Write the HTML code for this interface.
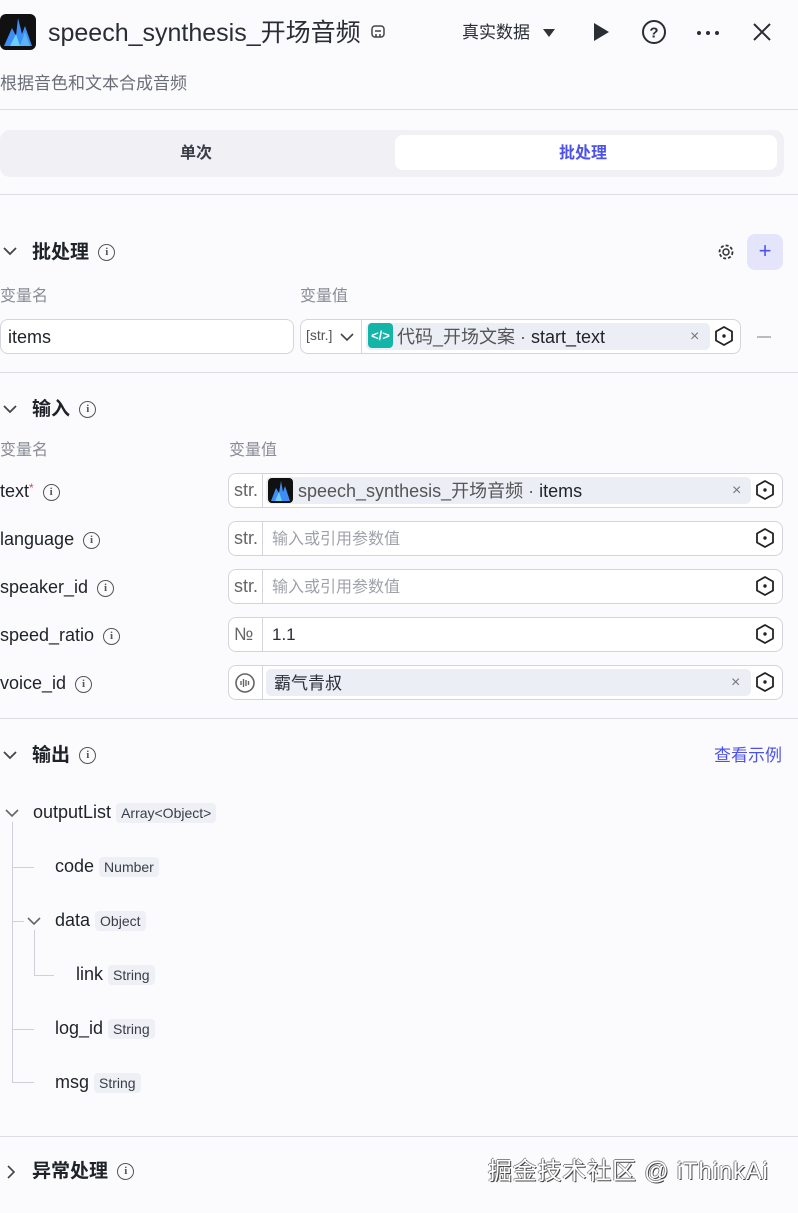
<!DOCTYPE html>
<html><head><meta charset="utf-8"><style>
*{box-sizing:border-box;margin:0;padding:0}
body{width:798px;height:1213px;background:#fbfbfd;font-family:"Liberation Sans","Noto Sans CJK SC",sans-serif;color:#1f2329;position:relative;overflow:hidden;line-height:1.2}
.a{position:absolute;white-space:nowrap}
.hr{position:absolute;left:0;width:798px;height:1px;background:#dcdce2}
.logo{position:absolute;background:#111;border-radius:6px;overflow:hidden}
.sec{font-size:19px;font-weight:bold;color:#1f2329}
.lbl{font-size:16px;color:#8a8c96}
.inp{position:absolute;border:1px solid #d4d5dc;border-radius:8px;background:#fff;height:35px}
.tag{position:absolute;background:#eceef6;border-radius:5px}
.pill{background:#eef0f6;border-radius:4px;font-size:14px;padding:2px 5px;color:#3a3d47}
.info{display:inline-block;width:17px;height:17px;border:1.5px solid #555;border-radius:50%;font-size:11px;text-align:center;line-height:14px;font-weight:bold;color:#555;vertical-align:middle;font-family:"Liberation Serif",serif;margin-left:4px}
.fname{font-size:18px;color:#1f2329}
.ph{color:#a0a2ab;font-size:16px}
.x{color:#777;font-size:16px}
.tl{position:absolute;background:#d0d1d8}
</style></head><body>

<div class="logo" style="left:0;top:14px;width:36px;height:36px">
<svg width="36" height="36"><polygon points="4,32 12,14 16,22 18,4 22,20 25,12 32,32" fill="#3e8ef7"/><polygon points="10,32 16,20 20,32" fill="#6ad0f5"/><polygon points="20,32 25,18 30,32" fill="#5ab5f7"/></svg></div>
<div class="a" style="left:48px;top:18px;font-size:25px;color:#2a2d35">speech_synthesis_开场音频</div>
<svg class="a" style="left:370px;top:24px" width="16" height="16"><rect x="2" y="2" width="12" height="11" rx="3" fill="none" stroke="#444" stroke-width="1.5"/><path d="M5 7h6M6 10v3M10 10v3" stroke="#444" stroke-width="1.5"/></svg>
<div class="a" style="left:462px;top:23px;font-size:17px;color:#2a2d35">真实数据</div>
<svg class="a" style="left:542px;top:28px" width="14" height="10"><polygon points="1,1 13,1 7,9" fill="#333"/></svg>
<svg class="a" style="left:592px;top:22px" width="18" height="20"><polygon points="2,1 17,10 2,19" fill="#2a2d35"/></svg>
<svg class="a" style="left:641px;top:19px" width="26" height="26"><circle cx="13" cy="13" r="11" fill="none" stroke="#2a2d35" stroke-width="2"/><text x="13" y="18.5" text-anchor="middle" font-size="15" font-weight="bold" fill="#2a2d35" font-family="Liberation Sans">?</text></svg>
<svg class="a" style="left:696px;top:30px" width="26" height="6"><circle cx="3" cy="3" r="2" fill="#2a2d35"/><circle cx="12" cy="3" r="2" fill="#2a2d35"/><circle cx="21" cy="3" r="2" fill="#2a2d35"/></svg>
<svg class="a" style="left:752px;top:22px" width="20" height="20"><path d="M2 2L18 18M18 2L2 18" stroke="#2a2d35" stroke-width="2"/></svg>

<div class="a" style="left:0;top:74px;font-size:17px;color:#6b6e78">根据音色和文本合成音频</div>
<div class="hr" style="top:109px"></div>

<div class="a" style="left:0;top:130px;width:784px;height:47px;background:#f1f1f5;border-radius:10px"></div>
<div class="a" style="left:395px;top:135px;width:382px;height:35px;background:#fff;border-radius:8px"></div>
<div class="a" style="left:180px;top:144px;font-size:16px;color:#3a3d47;font-weight:bold">单次</div>
<div class="a" style="left:559px;top:144px;font-size:16px;color:#4d53e8;font-weight:bold">批处理</div>
<div class="hr" style="top:194px"></div>

<svg class="a" style="left:3px;top:246px" width="14" height="10"><path d="M1 2l6 6 6-6" stroke="#444" stroke-width="1.8" fill="none"/></svg>
<div class="a sec" style="left:32px;top:242px">批处理 <span class="info">i</span></div>
<svg class="a" style="left:717px;top:243px" width="18" height="18"><circle cx="9" cy="9" r="3" fill="none" stroke="#333" stroke-width="1.5"/><circle cx="9" cy="9" r="6.5" fill="none" stroke="#333" stroke-width="1.8" stroke-dasharray="3 2"/></svg>
<div class="a" style="left:747px;top:234px;width:36px;height:36px;background:#e4e5fb;border-radius:8px;color:#4d53e8;font-size:22px;text-align:center;line-height:34px">+</div>
<div class="a lbl" style="left:0;top:287px">变量名</div>
<div class="a lbl" style="left:300px;top:287px">变量值</div>
<div class="inp" style="left:0;top:319px;width:294px"></div>
<div class="a fname" style="left:8px;top:327px">items</div>
<div class="inp" style="left:300px;top:319px;width:441px"></div>
<div class="a" style="left:306px;top:327px;font-size:14px;color:#555">[str.]</div>
<svg class="a" style="left:340px;top:332px" width="14" height="10"><path d="M1 2l6 6 6-6" stroke="#444" stroke-width="1.6" fill="none"/></svg>
<div class="a" style="left:361px;top:320px;width:1px;height:33px;background:#d4d5dc"></div>
<div class="tag" style="left:366px;top:323px;width:344px;height:27px"></div>
<div class="a" style="left:368px;top:323px;width:25px;height:25px;background:#13b5a8;border-radius:4px;color:#fff;font-size:13px;text-align:center;line-height:25px;font-weight:bold">&lt;/&gt;</div>
<div class="a" style="left:397px;top:326px;font-size:18px;color:#555;line-height:22px">代码_开场文案 · <span style="color:#1f2329">start_text</span></div>
<div class="a x" style="left:690px;top:327px">×</div>
<svg class="a" style="left:714px;top:326px" width="20" height="20"><polygon points="10,1 18,5.5 18,14.5 10,19 2,14.5 2,5.5" fill="none" stroke="#222" stroke-width="1.8" stroke-linejoin="round"/><circle cx="10" cy="10" r="1.7" fill="#222"/></svg>
<div class="a" style="left:757px;top:336px;width:14px;height:1.5px;background:#bbb"></div>
<div class="hr" style="top:372px"></div>

<svg class="a" style="left:3px;top:404px" width="14" height="10"><path d="M1 2l6 6 6-6" stroke="#444" stroke-width="1.8" fill="none"/></svg>
<div class="a sec" style="left:32px;top:399px">输入 <span class="info">i</span></div>
<div class="a lbl" style="left:0;top:441px">变量名</div>
<div class="a lbl" style="left:229px;top:441px">变量值</div>

<div class="a fname" style="left:0;top:481px">text<span style="color:#e54545;font-size:12px;vertical-align:top">*</span> <span class="info">i</span></div>
<div class="a fname" style="left:0;top:529px">language <span class="info">i</span></div>
<div class="a fname" style="left:0;top:577px">speaker_id <span class="info">i</span></div>
<div class="a fname" style="left:0;top:625px">speed_ratio <span class="info">i</span></div>
<div class="a fname" style="left:0;top:673px">voice_id <span class="info">i</span></div>

<div class="inp" style="left:228px;top:473px;width:555px"></div>
<div class="inp" style="left:228px;top:521px;width:555px"></div>
<div class="inp" style="left:228px;top:569px;width:555px"></div>
<div class="inp" style="left:228px;top:617px;width:555px"></div>
<div class="inp" style="left:228px;top:665px;width:555px"></div>
<div class="a" style="left:262px;top:474px;width:1px;height:33px;background:#d4d5dc"></div>
<div class="a" style="left:262px;top:522px;width:1px;height:33px;background:#d4d5dc"></div>
<div class="a" style="left:262px;top:570px;width:1px;height:33px;background:#d4d5dc"></div>
<div class="a" style="left:262px;top:618px;width:1px;height:33px;background:#d4d5dc"></div>
<div class="a" style="left:262px;top:666px;width:1px;height:33px;background:#d4d5dc"></div>
<div class="a" style="left:234px;top:480px;font-size:18px;color:#666">str.</div>
<div class="a" style="left:234px;top:528px;font-size:18px;color:#666">str.</div>
<div class="a" style="left:234px;top:576px;font-size:18px;color:#666">str.</div>
<div class="a" style="left:234px;top:624px;font-size:18px;color:#666">№</div>
<svg class="a" style="left:234px;top:672px" width="22" height="22"><circle cx="11" cy="11" r="9" fill="none" stroke="#666" stroke-width="1.6"/><path d="M7 9v4M9.5 7v8M12 8v6M14.5 9v4" stroke="#666" stroke-width="1.4"/></svg>
<div class="tag" style="left:266px;top:477px;width:485px;height:27px"></div>
<div class="logo" style="left:268px;top:478px;width:25px;height:25px;border-radius:4px"><svg width="25" height="25"><polygon points="3,23 8,10 11,15 13,3 15,14 17,8 22,23" fill="#3e8ef7"/><polygon points="7,23 11,14 14,23" fill="#6ad0f5"/></svg></div>
<div class="a" style="left:298px;top:480px;font-size:18px;color:#555;line-height:22px">speech_synthesis_开场音频 · <span style="color:#1f2329">items</span></div>
<div class="a x" style="left:732px;top:481px">×</div>
<div class="a ph" style="left:272px;top:530px;line-height:20px">输入或引用参数值</div>
<div class="a ph" style="left:272px;top:578px;line-height:20px">输入或引用参数值</div>
<div class="a" style="left:272px;top:625px;font-size:17px;color:#2a2d35">1.1</div>
<div class="tag" style="left:266px;top:669px;width:485px;height:27px"></div>
<div class="a" style="left:274px;top:673px;font-size:17px;color:#2a2d35;line-height:21px">霸气青叔</div>
<div class="a x" style="left:731px;top:673px">×</div>
<svg class="a" style="left:755px;top:480px" width="20" height="20"><polygon points="10,1 18,5.5 18,14.5 10,19 2,14.5 2,5.5" fill="none" stroke="#222" stroke-width="1.8" stroke-linejoin="round"/><circle cx="10" cy="10" r="1.7" fill="#222"/></svg>
<svg class="a" style="left:755px;top:528px" width="20" height="20"><polygon points="10,1 18,5.5 18,14.5 10,19 2,14.5 2,5.5" fill="none" stroke="#222" stroke-width="1.8" stroke-linejoin="round"/><circle cx="10" cy="10" r="1.7" fill="#222"/></svg>
<svg class="a" style="left:755px;top:576px" width="20" height="20"><polygon points="10,1 18,5.5 18,14.5 10,19 2,14.5 2,5.5" fill="none" stroke="#222" stroke-width="1.8" stroke-linejoin="round"/><circle cx="10" cy="10" r="1.7" fill="#222"/></svg>
<svg class="a" style="left:755px;top:624px" width="20" height="20"><polygon points="10,1 18,5.5 18,14.5 10,19 2,14.5 2,5.5" fill="none" stroke="#222" stroke-width="1.8" stroke-linejoin="round"/><circle cx="10" cy="10" r="1.7" fill="#222"/></svg>
<svg class="a" style="left:755px;top:672px" width="20" height="20"><polygon points="10,1 18,5.5 18,14.5 10,19 2,14.5 2,5.5" fill="none" stroke="#222" stroke-width="1.8" stroke-linejoin="round"/><circle cx="10" cy="10" r="1.7" fill="#222"/></svg>
<div class="hr" style="top:718px"></div>

<svg class="a" style="left:3px;top:750px" width="14" height="10"><path d="M1 2l6 6 6-6" stroke="#444" stroke-width="1.8" fill="none"/></svg>
<div class="a sec" style="left:32px;top:745px">输出 <span class="info">i</span></div>
<div class="a" style="left:714px;top:746px;font-size:17px;color:#4d53e8">查看示例</div>

<svg class="a" style="left:5px;top:808px" width="14" height="10"><path d="M1 2l6 6 6-6" stroke="#666" stroke-width="1.6" fill="none"/></svg>
<div class="a fname" style="left:33px;top:802px">outputList <span class="pill">Array&lt;Object&gt;</span></div>
<div class="tl" style="left:12px;top:822px;width:1px;height:260px"></div>
<div class="tl" style="left:12px;top:867px;width:22px;height:1px"></div>
<div class="tl" style="left:12px;top:1029px;width:22px;height:1px"></div>
<div class="tl" style="left:12px;top:1082px;width:22px;height:1px"></div>
<div class="tl" style="left:12px;top:921px;width:12px;height:1px"></div>
<div class="a fname" style="left:55px;top:856px">code <span class="pill">Number</span></div>
<svg class="a" style="left:27px;top:916px" width="14" height="10"><path d="M1 2l6 6 6-6" stroke="#666" stroke-width="1.6" fill="none"/></svg>
<div class="a fname" style="left:55px;top:910px">data <span class="pill">Object</span></div>
<div class="tl" style="left:34px;top:930px;width:1px;height:45px"></div>
<div class="tl" style="left:34px;top:975px;width:20px;height:1px"></div>
<div class="a fname" style="left:76px;top:964px">link <span class="pill">String</span></div>
<div class="a fname" style="left:55px;top:1018px">log_id <span class="pill">String</span></div>
<div class="a fname" style="left:55px;top:1072px">msg <span class="pill">String</span></div>
<div class="hr" style="top:1136px"></div>

<svg class="a" style="left:6px;top:1165px" width="10" height="14"><path d="M2 1l6 6-6 6" stroke="#444" stroke-width="1.6" fill="none"/></svg>
<div class="a sec" style="left:32px;top:1161px">异常处理 <span class="info">i</span></div>
<div class="a" style="left:488px;top:1158px;font-size:24px;letter-spacing:0.8px;color:#fff;text-shadow:1px 1px 0 #444,-1px 0 0 #888,0 -1px 0 #888">掘金技术社区 @ iThinkAi</div>
</body></html>
